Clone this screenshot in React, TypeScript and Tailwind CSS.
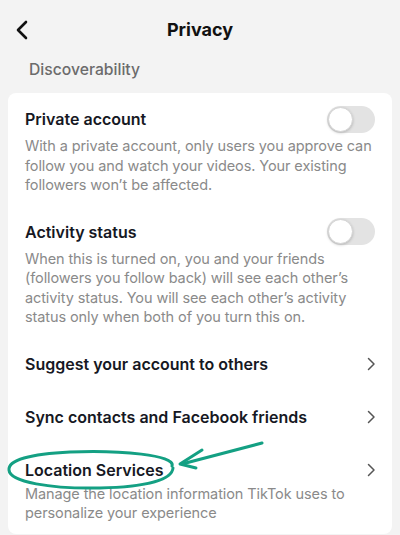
import React from "react";

const Toggle = () => (
  <div className="relative w-[48px] h-[27px] rounded-full bg-[#e3e3e3] shrink-0">
    <div className="absolute left-[1px] top-[1px] w-[25px] h-[25px] rounded-full bg-white border border-[#d4d4d4] shadow-[0_1px_3px_rgba(0,0,0,0.2)]" />
  </div>
);

const Chevron = () => (
  <svg width="9" height="14" viewBox="0 0 9 14" className="shrink-0 mr-[-1px]">
    <path d="M1.5 1.5 L7 7 L1.5 12.5" fill="none" stroke="#555" strokeWidth="1.5" strokeLinecap="round" strokeLinejoin="round" />
  </svg>
);

const Title = ({ children }: { children: React.ReactNode }) => (
  <span className="text-[16px] font-semibold text-[#161823]">{children}</span>
);

const Desc = ({ children, className = "" }: { children: React.ReactNode; className?: string }) => (
  <p className={"text-[14.5px] tracking-[-0.1px] leading-[19.5px] text-[#8a8a8a] " + className}>{children}</p>
);

export default function App() {
  return (
    <div
      className="w-[400px] h-[535px] bg-[#f3f3f3] overflow-hidden relative"
      style={{ fontFamily: "Inter, 'Noto Sans', sans-serif" }}
    >
      <div className="relative h-[60px] flex items-center justify-center">
        <svg width="14" height="20" viewBox="0 0 14 20" className="absolute left-[15px] top-[20px]">
          <path d="M11 2 L3 10 L11 18" fill="none" stroke="#111" strokeWidth="2.6" strokeLinecap="round" strokeLinejoin="round" />
        </svg>
        <span className="text-[18px] font-bold text-[#111] leading-none">Privacy</span>
      </div>
      <div className="pl-[29px] text-[15.7px] font-medium text-[#6b6b6b] leading-[20px]">Discoverability</div>
      <div className="mx-[8px] mt-[13px] bg-white rounded-[8px] px-[17px] pt-[14px] pb-[10px] h-[441px]">
        <div className="flex items-center justify-between h-[24px]">
          <Title>Private account</Title>
          <Toggle />
        </div>
        <Desc className="mt-[5px]">
          With a private account, only users you approve can follow you and watch your videos. Your existing followers won’t be affected.
        </Desc>
        <div className="mt-[25px] flex items-center justify-between h-[24px]">
          <Title>Activity status</Title>
          <Toggle />
        </div>
        <Desc className="mt-[5px] pr-[20px]">
          When this is turned on, you and your friends (followers you follow back) will see each other’s activity status. You will see each other’s activity status only when both of you turn this on.
        </Desc>
        <div className="mt-[25px] flex items-center justify-between h-[24px]">
          <Title>Suggest your account to others</Title>
          <Chevron />
        </div>
        <div className="mt-[29px] flex items-center justify-between h-[24px]">
          <Title>Sync contacts and Facebook friends</Title>
          <Chevron />
        </div>
        <div className="mt-[29px] flex items-center justify-between h-[24px]">
          <Title>Location Services</Title>
          <Chevron />
        </div>
        <Desc className="mt-[2px] pr-[10px]">
          Manage the location information TikTok uses to personalize your experience
        </Desc>
      </div>
      <svg className="absolute left-0 top-0 pointer-events-none" width="400" height="535" viewBox="0 0 400 535">
        <path
          d="M172 466 C 176 455, 120 450, 70 452 C 30 454, 8 460, 9 470 C 10 482, 50 489, 100 488 C 145 487, 172 480, 173 468"
          fill="none"
          stroke="#14a083"
          strokeWidth="3"
          strokeLinecap="round"
        />
        <path d="M262 443 L182 464" fill="none" stroke="#14a083" strokeWidth="3" strokeLinecap="round" />
        <path d="M202 450 L180 464 L196 468" fill="none" stroke="#14a083" strokeWidth="3" strokeLinecap="round" strokeLinejoin="round" />
      </svg>
    </div>
  );
}
